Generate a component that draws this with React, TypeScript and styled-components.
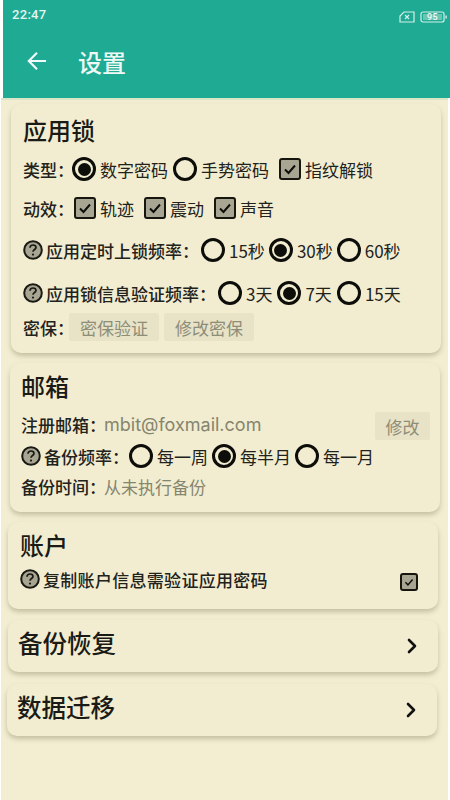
import React from 'react'
import styled, { createGlobalStyle } from 'styled-components'
import { ChevronRight } from 'lucide-react'

const GlobalStyle = createGlobalStyle`
  html, body {
    margin: 0;
    padding: 0;
    background: #fff;
    font-family: "Noto Sans CJK SC", "Noto Sans", sans-serif;
  }
`

const Screen = styled.div`
  width: 450px;
  height: 800px;
  background: #fff;
  overflow: hidden;
`

const Header = styled.header`
  height: 98px;
  margin-left: 3px;
  background: #1eaa93;
  color: #fff;
`

const StatusBar = styled.div`
  display: flex;
  align-items: center;
  justify-content: space-between;
  height: 24px;
  padding: 2px 3px 0 9px;
  font-family: "Roboto", sans-serif;
  font-size: 13px;
  font-weight: 500;
  letter-spacing: 0.3px;
  color: #e6f5f1;
`

const StatusIcons = styled.div`
  display: flex;
  align-items: center;
  gap: 5px;
  margin-top: 6px;
`

const TitleBar = styled.div`
  display: flex;
  align-items: center;
  gap: 31px;
  height: 60px;
  padding: 5px 0 0 24px;
`

const PageTitle = styled.h1`
  margin: 0 0 -2px;
  font-size: 24px;
  font-weight: 500;
  line-height: 32px;
  color: #eef9f6;
`

const Content = styled.main`
  box-sizing: border-box;
  height: 702px;
  margin: 0 2px 0 1px;
  border-top: 2px solid #d9e6c8;
  background: #f3eed2;
  overflow: hidden;
`

const Card = styled.section<{
  $left: number
  $height: number
  $top: number
  $padTop?: number
  $padLeft?: number
}>`
  box-sizing: border-box;
  width: 430px;
  height: ${(p) => p.$height}px;
  margin: ${(p) => p.$top}px 0 0 ${(p) => p.$left}px;
  padding: ${(p) => p.$padTop ?? 10}px 10px 0 ${(p) => p.$padLeft ?? 12}px;
  background: #f2edd0;
  border-radius: 10px;
  box-shadow: 0 3px 5px rgba(110, 105, 70, 0.35);
`

const CardTitle = styled.h2<{ $lift: number }>`
  margin: ${(p) => -p.$lift}px 0 ${(p) => p.$lift}px;
  font-size: 24px;
  font-weight: 500;
  line-height: 36px;
  color: #1a1a16;
`

const Row = styled.div<{ $height: number; $gap?: number }>`
  display: flex;
  align-items: center;
  gap: ${(p) => p.$gap ?? 4}px;
  height: ${(p) => p.$height}px;
  font-size: 17px;
  color: #22221c;
  white-space: nowrap;
`

const Label = styled.span<{ $trim?: number }>`
  margin-right: ${(p) => -(p.$trim ?? 0)}px;
  font-weight: 500;
`

const HelpLabel = styled.span`
  display: inline-flex;
  align-items: center;
  gap: 3px;
`

const WideLabel = styled(Label)`
  letter-spacing: 0.3px;
`

const Muted = styled.span`
  color: #85856f;
`

const Email = styled(Muted)`
  flex: 1;
  font-family: "Inter", "Noto Sans", sans-serif;
  font-size: 18px;
`

const Option = styled.span<{ $push?: number }>`
  display: inline-flex;
  align-items: center;
  gap: 4px;
  margin-left: ${(p) => p.$push ?? 0}px;
`

const RadioMark = styled.span<{ $on?: boolean }>`
  box-sizing: border-box;
  display: inline-flex;
  align-items: center;
  justify-content: center;
  width: 24px;
  height: 24px;
  border: 3px solid #0d0d0a;
  border-radius: 50%;

  &::after {
    content: '';
    width: 13px;
    height: 13px;
    border-radius: 50%;
    background: ${(p) => (p.$on ? '#0d0d0a' : 'transparent')};
  }
`

const CheckMark = styled.span<{ $size: number }>`
  box-sizing: border-box;
  display: inline-flex;
  align-items: center;
  justify-content: center;
  flex: none;
  width: ${(p) => p.$size}px;
  height: ${(p) => p.$size}px;
  border: 2.5px solid #16160f;
  border-radius: 3px;
  background: #a8a692;
`

const SecretButton = styled.span`
  display: inline-flex;
  align-items: center;
  justify-content: center;
  width: 90px;
  height: 28px;
  background: #e8e3c7;
  border-radius: 2px;
  font-size: 17px;
  color: #8d8d78;
`

const EditButton = styled(SecretButton)`
  width: 55px;
  margin-top: 4px;
`

const CheckSlot = styled.span`
  display: inline-flex;
  margin: 6px 10px 0 auto;
`

const NavCard = styled(Card)`
  display: flex;
  align-items: center;
  justify-content: space-between;
  padding: 0 14px 0 10px;
`

const NavTitle = styled.h2`
  margin: 0 0 7px;
  font-size: 24.5px;
  font-weight: 500;
  color: #1a1a16;
`

const Check: React.FC<{ size?: number }> = ({ size = 22 }) => (
  <CheckMark $size={size}>
    <svg width={size - 8} height={size - 8} viewBox="0 0 14 14" fill="none" stroke="#0d0d0a" strokeWidth="2">
      <path d="M2 7.5 L5.5 11 L12 3.5" />
    </svg>
  </CheckMark>
)

const Help = () => (
  <svg width="20" height="20" viewBox="0 0 20 20" style={{ flex: 'none' }}>
    <circle cx="10" cy="10" r="8.8" fill="#a8a692" stroke="#1a1a14" strokeWidth="2" />
    <path
      d="M7 7.8 C7 5.8 8.4 5 10 5 C11.7 5 13 6 13 7.5 C13 9.5 10 9.6 10 11.8"
      fill="none"
      stroke="#1a1a14"
      strokeWidth="1.7"
    />
    <circle cx="10" cy="14.6" r="1.1" fill="#1a1a14" />
  </svg>
)

const Radio: React.FC<{ text: string; on?: boolean }> = ({ text, on }) => (
  <Option>
    <RadioMark $on={on} />
    {text}
  </Option>
)

const CheckOption: React.FC<{ text: string; push?: number }> = ({ text, push }) => (
  <Option $push={push}>
    <Check />
    {text}
  </Option>
)

const App: React.FC = () => {
  return (
    <Screen>
      <GlobalStyle />
      <Header>
        <StatusBar>
          <span>22:47</span>
          <StatusIcons>
            <svg width="16" height="12" viewBox="0 0 16 12" fill="none" stroke="#d5f0ea" strokeWidth="1.2">
              <path d="M5 1 H15 V11 H1 V5 Z" />
              <path d="M6 4 L10 8 M10 4 L6 8" />
            </svg>
            <svg width="27" height="12" viewBox="0 0 27 12" fill="none" stroke="#d5f0ea" strokeWidth="1.2">
              <rect x="1" y="1" width="23" height="10" rx="2" />
              <rect x="3" y="3" width="19" height="6" fill="#6cc5b2" stroke="none" />
              <rect x="25.4" y="4.5" width="1.4" height="3" fill="#d5f0ea" stroke="none" />
              <text x="12.5" y="9.2" fontSize="9" textAnchor="middle" fill="#f2fbf9" stroke="none" fontFamily="Roboto, sans-serif">
                95
              </text>
            </svg>
          </StatusIcons>
        </StatusBar>
        <TitleBar>
          <svg width="20" height="20" viewBox="0 0 22 22" fill="none" stroke="#f2fbf9" strokeWidth="2.4">
            <path d="M21 11 H2 M11 2 L2 11 L11 20" />
          </svg>
          <PageTitle>设置</PageTitle>
        </TitleBar>
      </Header>

      <Content>
        <Card $left={10} $top={4} $height={249}>
          <CardTitle $lift={2}>应用锁</CardTitle>
          <Row $height={38} $gap={5}>
            <Label $trim={7}>类型：</Label>
            <Radio text="数字密码" on />
            <Radio text="手势密码" />
            <CheckOption text="指纹解锁" push={5} />
          </Row>
          <Row $height={40} $gap={10}>
            <Label $trim={10}>动效：</Label>
            <CheckOption text="轨迹" />
            <CheckOption text="震动" />
            <CheckOption text="声音" />
          </Row>
          <Row $height={44}>
            <HelpLabel>
              <Help />
              <Label $trim={2}>应用定时上锁频率：</Label>
            </HelpLabel>
            <Radio text="15秒" />
            <Radio text="30秒" on />
            <Radio text="60秒" />
          </Row>
          <Row $height={42} $gap={5}>
            <HelpLabel>
              <Help />
              <Label $trim={3}>应用锁信息验证频率：</Label>
            </HelpLabel>
            <Radio text="3天" />
            <Radio text="7天" on />
            <Radio text="15天" />
          </Row>
          <Row $height={26} $gap={5}>
            <Label $trim={10}>密保：</Label>
            <SecretButton>密保验证</SecretButton>
            <SecretButton>修改密保</SecretButton>
          </Row>
        </Card>

        <Card $left={9} $top={10} $height={149} $padTop={9} $padLeft={11}>
          <CardTitle $lift={4}>邮箱</CardTitle>
          <Row $height={32}>
            <Label $trim={6}>注册邮箱：</Label>
            <Email>mbit@foxmail.com</Email>
            <EditButton>修改</EditButton>
          </Row>
          <Row $height={32}>
            <HelpLabel>
              <Help />
              <Label $trim={4}>备份频率：</Label>
            </HelpLabel>
            <Radio text="每一周" />
            <Radio text="每半月" on />
            <Radio text="每一月" />
          </Row>
          <Row $height={28}>
            <Label $trim={6}>备份时间：</Label>
            <Muted>从未执行备份</Muted>
          </Row>
        </Card>

        <Card $left={7} $top={10} $height={87} $padTop={6}>
          <CardTitle $lift={1}>账户</CardTitle>
          <Row $height={30}>
            <HelpLabel>
              <Help />
              <WideLabel>复制账户信息需验证应用密码</WideLabel>
            </HelpLabel>
            <CheckSlot>
              <Check size={18} />
            </CheckSlot>
          </Row>
        </Card>

        <NavCard $left={7} $top={11} $height={52}>
          <NavTitle>备份恢复</NavTitle>
          <ChevronRight size={24} color="#111" strokeWidth={2.6} />
        </NavCard>

        <NavCard $left={6} $top={12} $height={52}>
          <NavTitle>数据迁移</NavTitle>
          <ChevronRight size={24} color="#111" strokeWidth={2.6} />
        </NavCard>
      </Content>
    </Screen>
  )
}

export default App
